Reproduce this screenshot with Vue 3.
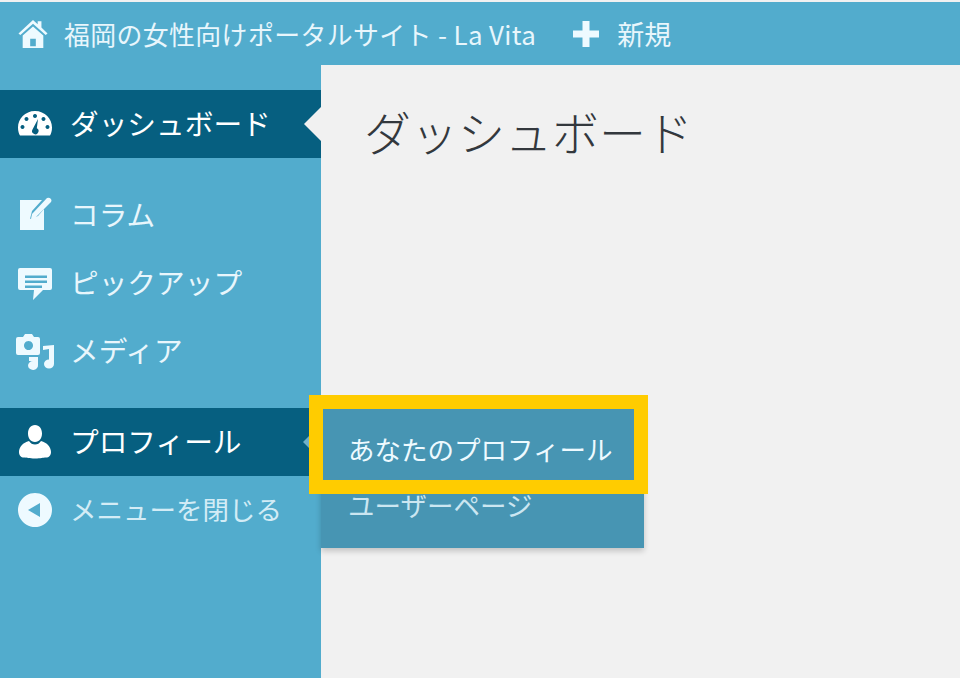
<template>
  <div class="admin">
    <header class="topbar">
      <svg class="top-home" viewBox="0 0 32 32"><path d="M16 1 L21 5.500 V2.500 H25 V9 L31.500 15.500 L29.500 17 L16 5 L2.500 17 L0.500 15.500 Z M5 17.500 L16 8 L27 17.500 V31 H5 Z M13 21 V29 H19 V21 Z" fill-rule="evenodd" /></svg>
      <span class="site-name">福岡の女性向けポータルサイト - La Vita</span>
      <svg class="top-plus" viewBox="0 0 28 28"><path d="M10.500 1 H17.500 V10.500 H27 V17.500 H17.500 V27 H10.500 V17.500 H1 V10.500 H10.500 Z" /></svg>
      <span class="new-label">新規</span>
    </header>

    <div class="body">
      <nav class="sidebar">
        <ul v-for="(group, i) in menuGroups" :key="i" class="menu-group">
          <li
            v-for="item in group"
            :key="item.label"
            class="menu-item"
            :class="{ current: item.current, dim: item.dim }"
          >
            <svg class="menu-icon" viewBox="0 0 36 36" v-html="item.icon"></svg>
            <span>{{ item.label }}</span>
            <i v-if="item.current" class="notch" :class="{ small: item.label === 'プロフィール' }"></i>
          </li>
        </ul>

        <div class="flyout">
          <div class="flyout-item">あなたのプロフィール</div>
          <div class="flyout-item muted">ユーザーページ</div>
        </div>
        <div class="highlight"></div>
      </nav>

      <main class="content">
        <h1>ダッシュボード</h1>
      </main>
    </div>
  </div>
</template>

<script setup>
const icons = {
  gauge: '<path fill-rule="evenodd" d="M18 5 C8 5 1 13 1 21.500 C1 25 1.800 27.500 3 29.500 H33 C34.200 27.500 35 25 35 21.500 C35 13 28 5 18 5 Z M18 8 a2 2 0 1 1 -0.010 0 Z M9.500 11 a2 2 0 1 1 -0.010 0 Z M26.500 11 a2 2 0 1 1 -0.010 0 Z M5.500 19 a2 2 0 1 1 -0.010 0 Z M30.500 19 a2 2 0 1 1 -0.010 0 Z M21 13 L19.800 22.200 A3.200 3.200 0 1 1 15.500 23.500 Z"/>',
  edit: '<path d="M3 3 H25 L15 14 L13 22 L21 19 L27 12 V33 H3 Z"/><path d="M15 17 L30 1 Q32 0 34 2 Q35 4 34 5 L18 21 L14 22 Z"/>',
  comment: '<path fill-rule="evenodd" d="M3 3 H33 Q35 3 35 5 V23 Q35 25 33 25 H26 L16 35 L17 25 H3 Q1 25 1 23 V5 Q1 3 3 3 Z M8 10.500 V13 H30 V10.500 Z M8 15.500 V18 H30 V15.500 Z M8 20.500 V23 H25 V20.500 Z"/>',
  media: '<path fill-rule="evenodd" d="M6 4 L8 1 H15 L17 4 H21 Q23 4 23 6 V20 Q23 22 21 22 H1 Q-1 22 -1 20 V6 Q-1 4 1 4 Z M11.500 8 a4.500 4.500 0 1 0 0.010 0 Z"/><path d="M37 12 V31 A5 4.500 0 1 1 32 26.500 V16 L26 17 V13 Z M12 24 H21 V32 A5 4.500 0 1 1 16 28 H12 Z"/>',
  user: '<path d="M18 1 C22.500 1 25 5 25 9.500 C25 14 22.500 18 18 18 C13.500 18 11 14 11 9.500 C11 5 13.500 1 18 1 Z M12 17 C13.500 19.500 15.500 20.500 18 20.500 C20.500 20.500 22.500 19.500 24 17 C30 18.500 34 23 34 28 C34 31.500 32 33.500 29 33.500 C26 33.500 24 34.500 18 34.500 C12 34.500 10 33.500 7 33.500 C4 33.500 2 31.500 2 28 C2 23 6 18.500 12 17 Z"/>',
  collapse: '<path fill-rule="evenodd" d="M18 1 A17 17 0 1 1 17.990 1 Z M23 11 L11 18 L23 25 Z"/>'
}

const menuGroups = [
  [{ label: 'ダッシュボード', icon: icons.gauge, current: true }],
  [
    { label: 'コラム', icon: icons.edit },
    { label: 'ピックアップ', icon: icons.comment },
    { label: 'メディア', icon: icons.media }
  ],
  [
    { label: 'プロフィール', icon: icons.user, current: true },
    { label: 'メニューを閉じる', icon: icons.collapse, dim: true }
  ]
]
</script>

<style>
html,
body {
  margin: 0;
  background: #f1f1f1;
}
</style>

<style scoped>
.admin {
  width: 960px;
  height: 678px;
  overflow: hidden;
  background: #f1f1f1;
  font-family: "Noto Sans CJK JP", "Noto Sans", sans-serif;
  font-weight: 400;
  color: #e8f6fc;
}

.topbar {
  display: flex;
  align-items: center;
  height: 63px;
  margin-top: 2px;
  padding-left: 18px;
  background: #52accd;
  box-sizing: border-box;
}

.top-home {
  width: 30px;
  height: 32px;
  fill: #eefaff;
  margin-right: 16px;
}

.site-name {
  font-size: 25.900px;
  white-space: nowrap;
  letter-spacing: 0.380px;
}

.top-plus {
  width: 28px;
  height: 28px;
  fill: #eefaff;
  margin-left: 36px;
  margin-right: 17px;
}

.new-label {
  font-size: 27px;
}

.body {
  display: flex;
  height: 613px;
}

.sidebar {
  position: relative;
  width: 321px;
  flex-shrink: 0;
  padding-top: 25px;
  box-sizing: border-box;
  background: #52accd;
}

.menu-group {
  list-style: none;
  margin: 0 0 23px;
  padding: 0;
}

.menu-item {
  position: relative;
  display: flex;
  align-items: center;
  height: 68px;
  padding-left: 17px;
  font-size: 28.700px;
  white-space: nowrap;
}

.menu-item span {
  margin-bottom: 3px;
}

.menu-item.current {
  background: #065f80;
  color: #fff;
}

.menu-item.dim {
  color: #d3ecf6;
  font-size: 26.500px;
}

.menu-icon {
  width: 36px;
  height: 36px;
  margin-right: 17px;
  fill: #eefaff;
  flex-shrink: 0;
  overflow: visible;
}

.menu-item.current .menu-icon {
  fill: #fff;
}

.notch {
  position: absolute;
  right: 0;
  top: 50%;
  width: 0;
  height: 0;
  margin-top: -17px;
  border: 17px solid transparent;
  border-left-width: 0;
  border-right: 17px solid #f1f1f1;
}

.notch.small {
  margin-top: -6px;
  border-width: 6px;
  border-left-width: 0;
  border-right-color: #6fb0c8;
  right: 12px;
}

.flyout {
  position: absolute;
  left: 321px;
  top: 343px;
  width: 323px;
  height: 140px;
  box-sizing: border-box;
  background: #4795b3;
  box-shadow: 0 3px 6px rgba(0, 0, 0, 0.2);
}

.flyout-item {
  display: flex;
  align-items: center;
  height: 56px;
  padding-left: 27px;
  padding-bottom: 4px;
  box-sizing: border-box;
  font-size: 26.500px;
  color: #eefaff;
  white-space: nowrap;
}

.flyout-item:first-child {
  height: 70px;
  padding-top: 14px;
}

.flyout-item.muted {
  color: #cbe6f1;
}

.highlight {
  position: absolute;
  left: 309px;
  top: 330px;
  width: 339px;
  height: 99px;
  box-sizing: border-box;
  border: 14px solid #ffcc00;
}

.content {
  flex: 1;
  padding: 34px 0 0 43px;
}

.content h1 {
  margin: 0;
  font-size: 47px;
  font-weight: 300;
  line-height: 64px;
  color: #33383d;
}
</style>
